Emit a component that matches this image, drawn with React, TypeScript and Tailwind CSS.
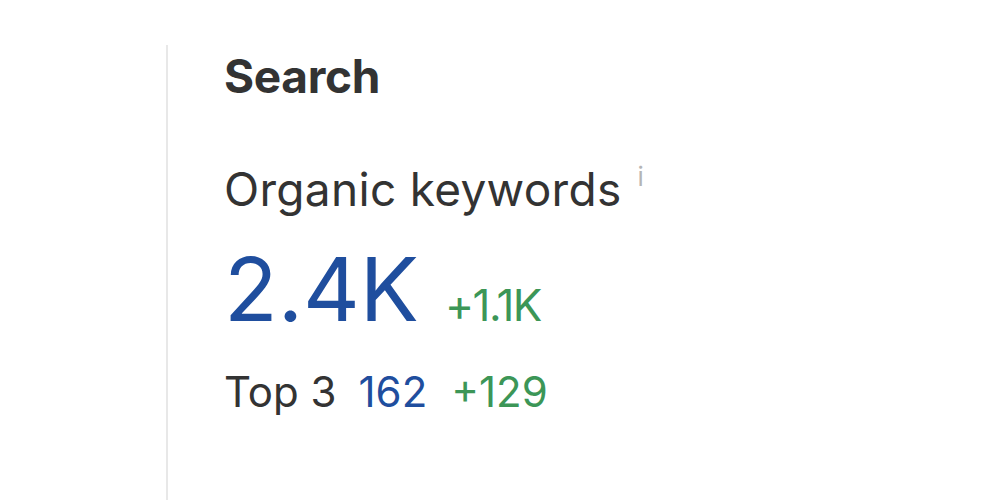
export default function App() {
  return (
    <div className="h-[500px] w-[990px] overflow-hidden bg-white font-['Inter',sans-serif] text-[#333333]">
      <div className="ml-[166px] mt-[45px] h-[455px] border-l-2 border-[#e8e8e8] pl-[56px] pt-[8px]">
        <h2 className="text-[46px] font-bold leading-[46px] tracking-[-0.3px]">Search</h2>
        <div className="mt-[65px] flex items-start">
          <span className="text-[46px] leading-[50px] tracking-[0.3px]">Organic keywords</span>
          <span className="ml-[16px] mt-[0px] text-[26px] leading-[26px] text-[#b5b5b5]">i</span>
        </div>
        <div className="mt-[31px] flex items-baseline">
          <span className="text-[88px] leading-[88px] tracking-[0px] text-[#1f4e9e]">2.4K</span>
          <span className="ml-[26px] text-[44px] leading-[44px] tracking-[-1.5px] text-[#3c9657]">+1.1K</span>
        </div>
        <div className="mt-[38px] flex items-baseline text-[42px] leading-[42px]">
          <span>Top 3</span>
          <span className="ml-[22px] text-[#1f4e9e]">162</span>
          <span className="ml-[24px] text-[#3c9657]">+129</span>
        </div>
      </div>
    </div>
  );
}
